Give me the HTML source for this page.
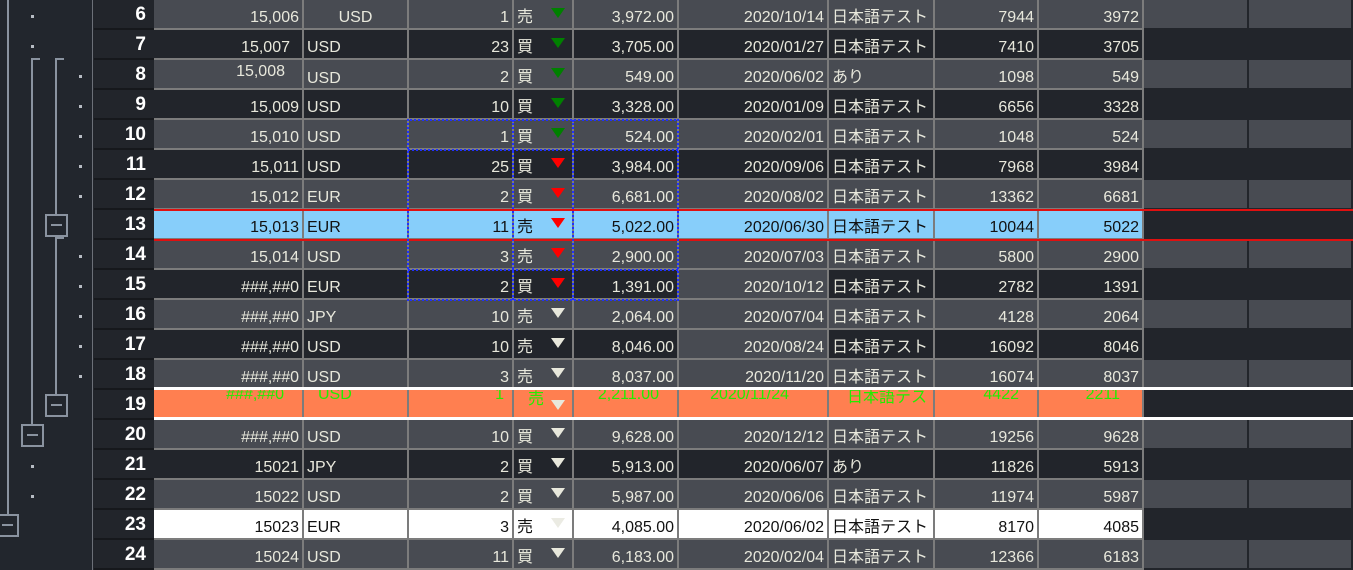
<!DOCTYPE html>
<html><head><meta charset="utf-8"><style>
*{margin:0;padding:0;box-sizing:border-box}
body{width:1353px;height:570px;overflow:hidden;background:#22252b;font-family:"Liberation Sans","Noto Sans CJK JP",sans-serif;font-size:16px;color:#e8e8dc;position:relative}
.ol{position:absolute;left:0;top:0;width:93px;height:570px;background:#22262d;border-right:1px solid #6c7078}
.v{position:absolute;background:#8a93a0;width:2px}
.h{position:absolute;background:#8a93a0;height:2px}
.bx{position:absolute;width:23px;height:23px;border:2px solid #8a93a0;background:#22262d}
.bx::after{content:"";position:absolute;left:4px;right:4px;top:8px;height:2px;background:#8a93a0}
.dot{position:absolute;width:3px;height:3px;background:#b8bcc4}
.rh{position:absolute;left:94px;width:60px;height:30px;background:#22252b;border-bottom:2px solid #16181c;color:#fff;font-weight:bold;font-size:19px;text-align:right;padding-right:8px;line-height:30px}
.r{position:absolute;left:154px;width:1199px;height:30px;display:grid;grid-template-columns:150px 105px 105px 60px 105px 150px 106px 104px 105px 105px 104px}
.r>div{border-right:2px solid #7c7c7c;border-bottom:2px solid #7c7c7c;height:30px;line-height:35px;padding:0 3px;white-space:nowrap;overflow:hidden;position:relative}
.L>div{background:#484b52}
.D>div{background:#22252b}
.r>div:nth-child(1),.r>div:nth-child(3),.r>div:nth-child(5),.r>div:nth-child(6),.r>div:nth-child(8),.r>div:nth-child(9){text-align:right}
.L>div:nth-child(10),.L>div:nth-child(11){border-color:#22252b}
.D>div:nth-child(10),.D>div:nth-child(11){border-color:#22252b}
.t{position:absolute;left:37px;top:8px;width:0;height:0;border-left:7px solid transparent;border-right:7px solid transparent;border-top:10px solid #e8e8dc}
.g{border-top-color:#008000}.rd{border-top-color:#ff0000}
.B>div{background:#87cefa;color:#111}
.W>div{background:#fff;color:#111}
.B>div:nth-child(10),.B>div:nth-child(11),.W>div:nth-child(10),.W>div:nth-child(11),.O>div:nth-child(10),.O>div:nth-child(11){background:#22252b;border-color:#22252b}
.O>div{background:#ff7f50;color:#22ee00}
.sel{position:absolute;z-index:5}
</style></head><body>
<div class="ol">
<div class="v" style="left:7px;top:0;height:514px"></div>
<div class="v" style="left:31px;top:58px;height:366px"></div><div class="h" style="left:31px;top:58px;width:9px"></div>
<div class="v" style="left:55px;top:58px;height:156px"></div><div class="h" style="left:55px;top:58px;width:9px"></div>
<div class="v" style="left:55px;top:237px;height:157px"></div><div class="h" style="left:55px;top:237px;width:9px"></div>
<div class="bx" style="left:45px;top:214px"></div>
<div class="bx" style="left:45px;top:394px"></div>
<div class="bx" style="left:21px;top:424px"></div>
<div class="bx" style="left:-4px;top:514px"></div>
<div class="dot" style="left:31px;top:15px"></div><div class="dot" style="left:31px;top:45px"></div>
<div class="dot" style="left:79px;top:75px"></div><div class="dot" style="left:79px;top:105px"></div><div class="dot" style="left:79px;top:135px"></div><div class="dot" style="left:79px;top:165px"></div><div class="dot" style="left:79px;top:195px"></div>
<div class="dot" style="left:79px;top:255px"></div><div class="dot" style="left:79px;top:285px"></div><div class="dot" style="left:79px;top:315px"></div><div class="dot" style="left:79px;top:345px"></div><div class="dot" style="left:79px;top:375px"></div>
<div class="dot" style="left:31px;top:465px"></div><div class="dot" style="left:31px;top:495px"></div>
</div>
<div class="rh" style="top:0">6</div><div class="rh" style="top:30px">7</div><div class="rh" style="top:60px">8</div><div class="rh" style="top:90px">9</div><div class="rh" style="top:120px">10</div><div class="rh" style="top:150px">11</div><div class="rh" style="top:180px">12</div><div class="rh" style="top:210px">13</div><div class="rh" style="top:240px">14</div><div class="rh" style="top:270px">15</div><div class="rh" style="top:300px">16</div><div class="rh" style="top:330px">17</div><div class="rh" style="top:360px">18</div><div class="rh" style="top:390px">19</div><div class="rh" style="top:420px">20</div><div class="rh" style="top:450px">21</div><div class="rh" style="top:480px">22</div><div class="rh" style="top:510px">23</div><div class="rh" style="top:540px">24</div>

<div class="r L" style="top:0"><div>15,006</div><div style="text-align:center">USD</div><div>1</div><div>売<span class="t g"></span></div><div>3,972.00</div><div>2020/10/14</div><div>日本語テスト</div><div>7944</div><div>3972</div><div></div><div></div></div>
<div class="r D" style="top:30px"><div style="padding-right:12px">15,007</div><div>USD</div><div>23</div><div>買<span class="t g"></span></div><div>3,705.00</div><div>2020/01/27</div><div>日本語テスト</div><div>7410</div><div>3705</div><div></div><div></div></div>
<div class="r L" style="top:60px"><div style="line-height:24px;padding-right:17px">15,008</div><div style="line-height:38px">USD</div><div>2</div><div>買<span class="t g"></span></div><div>549.00</div><div>2020/06/02</div><div>あり</div><div>1098</div><div>549</div><div></div><div></div></div>
<div class="r D" style="top:90px"><div>15,009</div><div>USD</div><div>10</div><div>買<span class="t g"></span></div><div>3,328.00</div><div>2020/01/09</div><div>日本語テスト</div><div>6656</div><div>3328</div><div></div><div></div></div>
<div class="r L" style="top:120px"><div>15,010</div><div>USD</div><div>1</div><div>買<span class="t g"></span></div><div>524.00</div><div>2020/02/01</div><div>日本語テスト</div><div>1048</div><div>524</div><div></div><div></div></div>
<div class="r D" style="top:150px"><div>15,011</div><div>USD</div><div>25</div><div>買<span class="t rd"></span></div><div>3,984.00</div><div>2020/09/06</div><div>日本語テスト</div><div>7968</div><div>3984</div><div></div><div></div></div>
<div class="r L" style="top:180px"><div>15,012</div><div>EUR</div><div>2</div><div>買<span class="t rd"></span></div><div>6,681.00</div><div>2020/08/02</div><div>日本語テスト</div><div>13362</div><div>6681</div><div></div><div></div></div>
<div class="r B" style="top:210px"><div>15,013</div><div>EUR</div><div>11</div><div>売<span class="t rd"></span></div><div>5,022.00</div><div>2020/06/30</div><div>日本語テスト</div><div>10044</div><div>5022</div><div></div><div></div></div>
<div class="r L" style="top:240px"><div>15,014</div><div>USD</div><div>3</div><div>売<span class="t rd"></span></div><div>2,900.00</div><div>2020/07/03</div><div>日本語テスト</div><div>5800</div><div>2900</div><div></div><div></div></div>
<div class="r D" style="top:270px"><div>###,##0</div><div>EUR</div><div>2</div><div>買<span class="t rd"></span></div><div>1,391.00</div><div style="background:#484b52">2020/10/12</div><div>日本語テスト</div><div>2782</div><div>1391</div><div></div><div></div></div>
<div class="r L" style="top:300px"><div>###,##0</div><div>JPY</div><div>10</div><div>売<span class="t"></span></div><div>2,064.00</div><div>2020/07/04</div><div>日本語テスト</div><div>4128</div><div>2064</div><div></div><div></div></div>
<div class="r D" style="top:330px"><div>###,##0</div><div>USD</div><div>10</div><div>売<span class="t"></span></div><div>8,046.00</div><div style="background:#484b52">2020/08/24</div><div>日本語テスト</div><div>16092</div><div>8046</div><div></div><div></div></div>
<div class="r L" style="top:360px"><div>###,##0</div><div>USD</div><div>3</div><div>売<span class="t"></span></div><div>8,037.00</div><div>2020/11/20</div><div>日本語テスト</div><div>16074</div><div>8037</div><div></div><div></div></div>
<div class="r O" style="top:390px"><div style="line-height:10px;padding-right:18px">###,##0</div><div style="line-height:10px;padding-left:14px">USD</div><div style="line-height:10px;padding-right:8px">1</div><div style="line-height:20px;padding-left:14px">売<span class="t" style="top:10px"></span></div><div style="line-height:10px;padding-right:18px">2,211.00</div><div style="line-height:10px;padding-right:38px">2020/11/24</div><div style="line-height:16px;padding-left:18px">日本語テス</div><div style="line-height:10px;padding-right:18px">4422</div><div style="line-height:10px;padding-right:22px">2211</div><div></div><div></div></div>
<div class="r L" style="top:420px"><div>###,##0</div><div>USD</div><div>10</div><div>買<span class="t"></span></div><div>9,628.00</div><div>2020/12/12</div><div>日本語テスト</div><div>19256</div><div>9628</div><div></div><div></div></div>
<div class="r D" style="top:450px"><div>15021</div><div>JPY</div><div>2</div><div>買<span class="t"></span></div><div>5,913.00</div><div>2020/06/07</div><div>あり</div><div>11826</div><div>5913</div><div></div><div></div></div>
<div class="r L" style="top:480px"><div>15022</div><div>USD</div><div>2</div><div>買<span class="t"></span></div><div>5,987.00</div><div>2020/06/06</div><div>日本語テスト</div><div>11974</div><div>5987</div><div></div><div></div></div>
<div class="r W" style="top:510px"><div>15023</div><div>EUR</div><div>3</div><div>売<span class="t" style="border-top-color:#ebebe3"></span></div><div>4,085.00</div><div>2020/06/02</div><div>日本語テスト</div><div>8170</div><div>4085</div><div></div><div></div></div>
<div class="r L" style="top:540px"><div>15024</div><div>USD</div><div>11</div><div>買<span class="t"></span></div><div>6,183.00</div><div>2020/02/04</div><div>日本語テスト</div><div>12366</div><div>6183</div><div></div><div></div></div>

<div class="sel" style="left:154px;top:209px;width:1199px;height:2px;background:#e01010"></div>
<div class="sel" style="left:154px;top:239px;width:1199px;height:2px;background:#e01010"></div>
<div class="sel" style="left:154px;top:387px;width:1199px;height:3px;background:#fff"></div>
<div class="sel" style="left:154px;top:417px;width:1199px;height:3px;background:#fff"></div>

<div class="sel" style="left:407px;top:119px;width:272px;height:182px;border:2px dotted #2030ff"></div>
<div class="sel" style="left:512px;top:120px;width:0;height:180px;border-left:2px dotted #2030ff"></div>
<div class="sel" style="left:572px;top:120px;width:0;height:180px;border-left:2px dotted #2030ff"></div>
<div class="sel" style="left:408px;top:149px;width:270px;height:0;border-top:2px dotted #2030ff"></div>
<div class="sel" style="left:408px;top:269px;width:270px;height:0;border-top:2px dotted #2030ff"></div>
</body></html>
